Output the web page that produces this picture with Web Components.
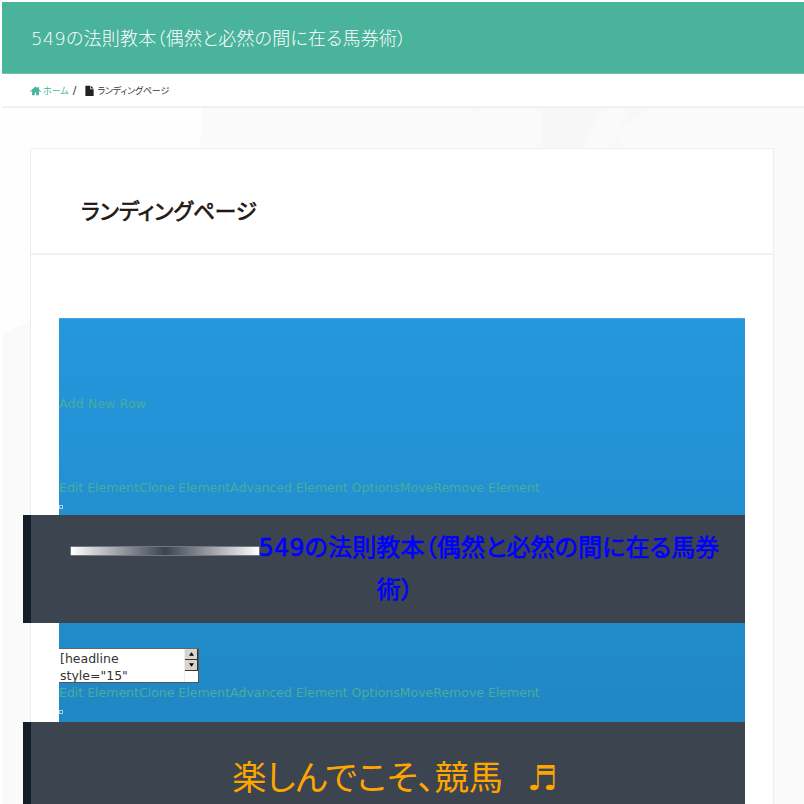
<!DOCTYPE html>
<html lang="ja">
<head>
<meta charset="utf-8">
<title>ランディングページ</title>
<style>
  html, body { margin: 0; height: 804px; overflow: hidden; background: #fff; }
  body { font-family: "DejaVu Sans", "Noto Sans CJK JP", sans-serif; padding: 2px 0 0 2px; box-sizing: border-box; }
  .rule { display: inline-block; width: 188px; height: 8px; vertical-align: 1px;
    background: linear-gradient(90deg, #fff, #3c4450 50%, #fff); box-shadow: 0 0 0 .5px #aaa; }
  .blue { color: #0000ff; font-size: 24px; letter-spacing: .15px; -webkit-text-stroke: .6px #0000ff; line-height: 42px; }
</style>
</head>
<body>
<site-header>549の法則教本（偶然と必然の間に在る馬券術）</site-header>
<bread-crumbs></bread-crumbs>
<page-body>
  <content-card heading="ランディングページ">
    <lp-builder>
      <dark-band>
        <span class="rule"></span><span class="blue">549の法則教本（偶然と必然の間に在る馬券術）</span>
      </dark-band>
    </lp-builder>
  </content-card>
</page-body>

<script>
class SiteHeader extends HTMLElement {
  constructor() {
    super();
    this.attachShadow({ mode: "open" });
    this.shadowRoot.innerHTML = `
      <style>
        :host { display: flex; align-items: center; padding: 0 0 2px 29px; box-sizing: border-box; height: 72px;
          background: #49b39b; border-bottom: 1px solid #6cc4b0; color: #fff; font-size: 18px; font-weight: 300;
          letter-spacing: .22px; font-feature-settings: "palt"; }
      </style>
      <slot></slot>`;
  }
}

class BreadCrumbs extends HTMLElement {
  constructor() {
    super();
    this.attachShadow({ mode: "open" });
    this.shadowRoot.innerHTML = `
      <style>
        :host { display: flex; align-items: center; height: 32px; padding-left: 28px; font-size: 9px;
          border-bottom: 2px solid #f1f1f1; color: #333; font-feature-settings: "palt"; }
        svg { width: 11px; height: 11px; flex: none; }
        .home { color: #49b39b; display: flex; align-items: center; gap: 2px; }
        .sep { margin: 0 8px 0 4px; font-size: 11px; }
        .now { display: flex; align-items: center; gap: 2px; letter-spacing: -.2px; }
      </style>
      <span class="home">
        <svg viewBox="0 0 16 16"><path fill="#49b39b" d="M8 2 0 9l1 1 2-1.6V15h4v-4h2v4h4V8.400L15 10l1-1-3-2.600V3h-2v1.800z"/></svg>
        ホーム
      </span>
      <span class="sep">/</span>
      <span class="now">
        <svg viewBox="0 0 16 16"><path fill="#222" d="M2 1h7v5h5v10H2zM10 1l4 4h-4z"/></svg>
        ランディングページ
      </span>`;
  }
}

class PageBody extends HTMLElement {
  constructor() {
    super();
    this.attachShadow({ mode: "open" });
    this.shadowRoot.innerHTML = `
      <style>
        :host { display: block; position: relative; padding: 40px 30px 0 28px; background: #fafafa; height: 700px; }
        .tex { position: absolute; left: 0; top: 0; width: 100%; height: 100%; }
        ::slotted(*) { position: relative; }
      </style>
      <svg class="tex" viewBox="0 0 802 700" preserveAspectRatio="none">
        <path fill="#f7f7f7" d="M540 0h61l-22 40h-39z"/>
        <path fill="#f8f8f8" d="M628 0h16l-26 22-4 18h-6z"/>
        <path fill="#f8f8f8" d="M470 0h10l-5 10z"/>
        <path fill="#fefefe" d="M0 0h200l-2 40H28v162L0 214z"/>
      </svg>
      <slot></slot>`;
  }
}

class ContentCard extends HTMLElement {
  constructor() {
    super();
    this.attachShadow({ mode: "open" });
    this.shadowRoot.innerHTML = `
      <style>
        :host { display: block; background: #fff; border: 1px solid #eee; height: 800px; }
        header { height: 106px; box-sizing: border-box; padding: 0 0 0 50px; border-bottom: 2px solid #f1f1f1;
          display: flex; align-items: center; }
        h1 { margin: 16px 0 0; font-size: 21.6px; font-weight: 400; -webkit-text-stroke: .7px #231815; color: #231815; font-feature-settings: "palt"; }
        .inner { padding: 63px 28px 0; }
      </style>
      <header><h1></h1></header>
      <div class="inner"><slot></slot></div>`;
    this.shadowRoot.querySelector("h1").textContent = this.getAttribute("heading");
  }
}

// row of builder links plus the tiny handle square
class BuilderLinks extends HTMLElement {
  constructor() {
    super();
    this.attachShadow({ mode: "open" });
    this.shadowRoot.innerHTML = `
      <style>
        :host { display: block; height: 36px; font: 12.5px/18px "DejaVu Sans", sans-serif; color: #48ad9c; }
        .box { display: block; width: 2px; height: 2px; border: 1px solid #a9cfe6; margin-top: 8px; }
      </style>
      <div>Edit ElementClone ElementAdvanced Element OptionsMoveRemove Element</div>
      <span class="box"></span>`;
  }
}

class DarkBand extends HTMLElement {
  constructor() {
    super();
    this.attachShadow({ mode: "open" });
    this.shadowRoot.innerHTML = `
      <style>
        :host { display: block; margin-left: -36px; background: #3c4450; border-left: 8px solid #141e29;
          padding: 12px 19px 12px 33px; text-align: center; font-feature-settings: "palt"; }
      </style>
      <slot></slot>`;
  }
}

class LpBuilder extends HTMLElement {
  constructor() {
    super();
    this.attachShadow({ mode: "open" });
    this.shadowRoot.innerHTML = `
      <style>
        :host { display: block; background: linear-gradient(#2597dd, #2087c4 404px); height: 500px; border-top: 1px solid #45a6e2; box-sizing: border-box; }
        .add { height: 9px; padding-top: 76px; font: 12.75px/18px "DejaVu Sans", sans-serif; color: #48ad9c; }
        .ta { display: grid; grid-template-columns: 1fr 14px; box-sizing: border-box; width: 140px; height: 35px; margin-top: 25px; margin-bottom: 1px;
          background: #fff; border: 1px solid #555; border-left: 0; border-top-color: #666; overflow: hidden;
          font: 12.5px/17px "DejaVu Sans", sans-serif; color: #333; }
        .ta div { padding: 1px 0 0 1px; white-space: nowrap; overflow: hidden; }
        .bar { display: flex; flex-direction: column; border-left: 1px solid #eee; }
        .bar i { display: flex; align-items: center; justify-content: center; height: 10px; background: #d8d4cc; border-bottom: 1px solid #333; border-right: 1px solid #333; }
        .bar svg { width: 5px; height: 4px; }
      </style>
      <div class="add">Add New Row</div>
      <builder-links style="margin-top:75px;"></builder-links>
      <slot></slot>
      <div class="ta">
        <div>[headline<br>style="15"</div>
        <span class="bar">
          <i><svg viewBox="0 0 6 4"><path d="M3 0l3 4H0z"/></svg></i>
          <i><svg viewBox="0 0 6 4"><path d="M0 0h6L3 4z"/></svg></i>
        </span>
      </div>
      <builder-links style="height:38px;"></builder-links>
      <dark-band style="padding-top:32px;padding-bottom:40px;">
        <span style="color:#ffa500;font-size:34.2px;line-height:48px;">楽しんでこそ、競馬<span style="margin-left:24px;">♬</span></span>
      </dark-band>`;
  }
}

customElements.define("site-header", SiteHeader);
customElements.define("bread-crumbs", BreadCrumbs);
customElements.define("page-body", PageBody);
customElements.define("content-card", ContentCard);
customElements.define("builder-links", BuilderLinks);
customElements.define("dark-band", DarkBand);
customElements.define("lp-builder", LpBuilder);
</script>
</body>
</html>
